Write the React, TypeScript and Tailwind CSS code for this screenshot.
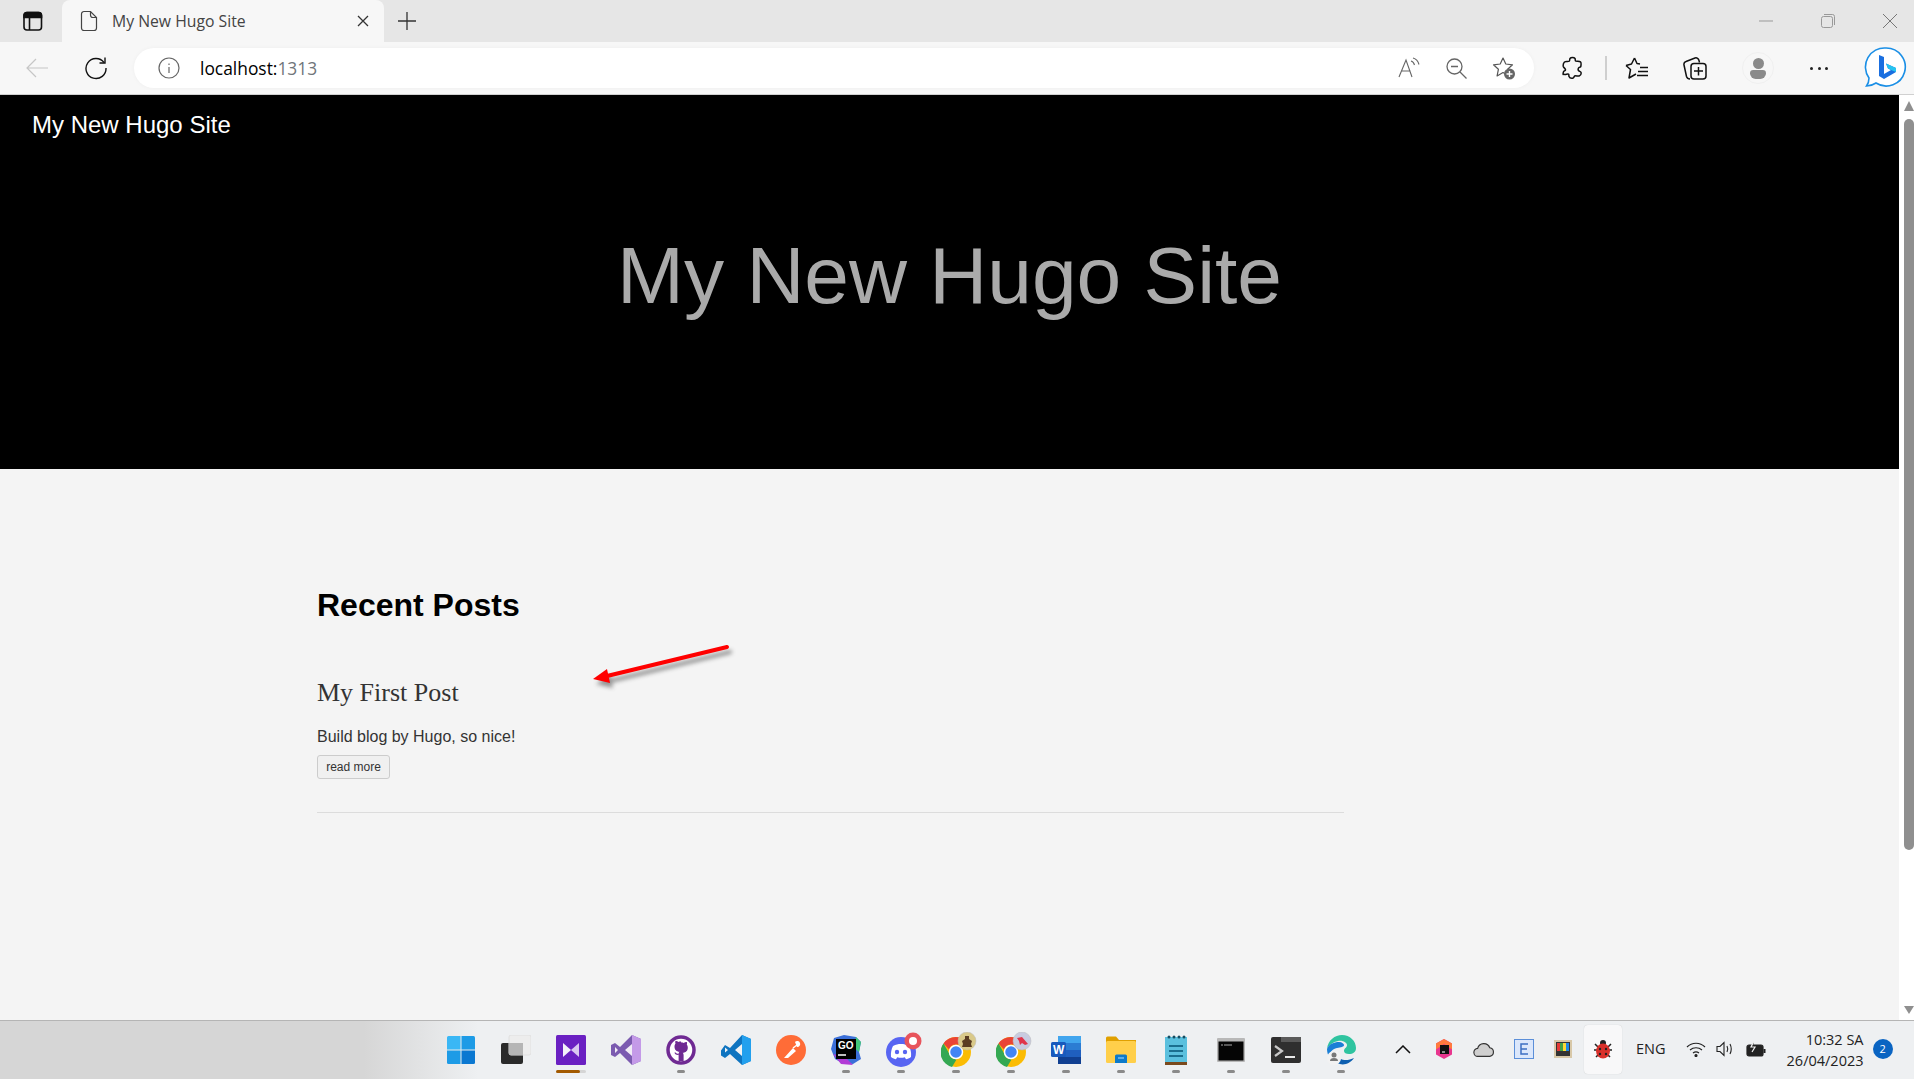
import React from "react";

const Tab = () => (
  <div className="flex h-[42px] w-full items-end bg-[#e6e6e6] pl-[23px]">
    <div className="flex h-[42px] w-[39px] items-center justify-start">
      <svg width="20" height="20" viewBox="0 0 20 20" fill="none" stroke="#111" strokeWidth="1.600">
        <rect x="1" y="1.500" width="17.500" height="17.500" rx="3" />
        <path d="M6.500 6.500V19" />
        <path d="M1 6.500V4.500A3 3 0 0 1 4 1.500h11.500a3 3 0 0 1 3 3v2z" fill="#111" />
      </svg>
    </div>
    <div className="flex h-[42px] w-[322px] items-center rounded-t-[8px] bg-[#f7f7f7] pl-[18px] pr-[15px]">
      <svg width="18" height="22" viewBox="0 0 18 22" fill="none" stroke="#444" strokeWidth="1.200">
        <path d="M4 1.500h6.500L16.500 7.500V18a2.500 2.500 0 0 1-2.500 2.500H4A2.500 2.500 0 0 1 1.500 18V4A2.500 2.500 0 0 1 4 1.500z" />
        <path d="M10.500 1.500V5a2.500 2.500 0 0 0 2.500 2.500h3.500" />
      </svg>
      <span className="ml-[14px] flex-1 pt-[1px] font-['Open_Sans',sans-serif] text-[15.750px] text-[#444]">My New Hugo Site</span>
      <svg width="12" height="12" viewBox="0 0 12 12" stroke="#333" strokeWidth="1.300">
        <path d="M1 1l10 10M11 1L1 11" />
      </svg>
    </div>
    <div className="flex h-[42px] w-[46px] items-center justify-center">
      <svg width="20" height="20" viewBox="0 0 20 20" stroke="#333" strokeWidth="1.300">
        <path d="M10 1v18M1 10h18" />
      </svg>
    </div>
    <div className="flex-1" />
    <div className="flex h-[42px] items-center pr-[17px]">
      <svg width="14" height="2" viewBox="0 0 14 2" className="mr-[48px]">
        <path d="M0 1h14" stroke="#999" strokeWidth="1" />
      </svg>
      <svg width="14" height="14" viewBox="0 0 14 14" fill="none" stroke="#999" className="mr-[48px]">
        <rect x="0.500" y="2.500" width="11" height="11" rx="2" />
        <path d="M3 .5h8.500a2 2 0 0 1 2 2V11" />
      </svg>
      <svg width="14" height="14" viewBox="0 0 14 14" stroke="#777" strokeWidth="1">
        <path d="M0 0l14 14M14 0L0 14" />
      </svg>
    </div>
  </div>
);

const BingIcon = () => (
  <svg width="44" height="44" viewBox="0 0 44 44" fill="none">
    <path d="M22 2a19 19 0 1 1-10 35c-3 2-6 3-9.500 3 1.500-2 2.500-4.500 2.500-8A19 19 0 0 1 22 2z" fill="#fff" stroke="#1b8fe6" strokeWidth="1.600" />
    <path d="M15 9l5 2v17l7-4-3-1.500-2-5 10 4.500v4l-12 7-5-3z" fill="#1a6fe0" />
    <path d="M22 17.500l10 4.500v4l-5-2-3-1.500z" fill="#27c4f0" />
  </svg>
);

const Toolbar = () => (
  <div className="flex h-[53px] w-full items-center border-b border-[#d0d0d0] bg-[#f7f7f7]">
    <div className="flex w-[134px] items-center">
      <svg width="24" height="24" viewBox="0 0 24 24" fill="none" stroke="#c6c6c6" strokeWidth="1.200" className="ml-[25px]">
        <path d="M23 12H2M11 3l-9 9 9 9" />
      </svg>
      <svg width="24" height="24" viewBox="0 0 24 24" fill="none" stroke="#111" strokeWidth="1.400" className="ml-[35px]">
        <path d="M20 6.500A10 10 0 1 0 22 12" />
        <path d="M21 1.500V7h-5.500" />
      </svg>
    </div>
    <div className="flex h-[40px] w-[1400px] items-center rounded-full bg-white pl-[24px] pr-[18px] shadow-[0_0_4px_rgba(0,0,0,0.04)]">
      <svg width="22" height="22" viewBox="0 0 22 22" fill="none" stroke="#666" strokeWidth="1.200">
        <circle cx="11" cy="11" r="10" />
        <path d="M11 10v6M11 6.500v1.500" />
      </svg>
      <span className="ml-[20px] flex-1 font-['Open_Sans',sans-serif] text-[17.400px] text-black">
        localhost:<span className="text-[#70757a]">1313</span>
      </span>
      <svg width="22" height="22" viewBox="0 0 22 22" fill="none" stroke="#666" strokeWidth="1.100" className="mr-[26px]">
        <path d="M1 20L8 3l6 17M3.500 14h9" />
        <path d="M13 4c2 .5 3 2 3.500 4M15 1c3 .8 5 3 6 6.500" />
      </svg>
      <svg width="21" height="21" viewBox="0 0 21 21" fill="none" stroke="#666" strokeWidth="1.300" className="mr-[25px]">
        <circle cx="8.500" cy="8.500" r="7.500" />
        <path d="M5 8.500h7M14 14l6.500 6.500" />
      </svg>
      <svg width="24" height="24" viewBox="0 0 24 24" fill="none">
        <path d="M11 2l2.800 6 6.700.8-4.900 4.500 1.300 6.600-5.900-3.300-5.900 3.300 1.300-6.600L1.500 8.800 8.200 8z" stroke="#555" strokeWidth="1.200" strokeLinejoin="round" />
        <circle cx="17.500" cy="18" r="5.500" fill="#666" />
        <path d="M17.500 15v6M14.500 18h6" stroke="#fff" strokeWidth="1.400" />
      </svg>
    </div>
    <svg width="22" height="24" viewBox="0 0 22 24" fill="none" stroke="#111" strokeWidth="1.500" className="ml-[28px]">
      <path d="M8 2.500c1-1.500 4-1.500 5 0 .5.800 0 2 .5 2.500.8.700 3.500-.3 5 .8 1 .8.500 3.500.3 4.700-.2 1-1.800.5-2.300 1.500s-.2 2.500.5 3c1 .6 2.200.5 2.200 2 0 1.500-.5 2.500-2 3-1.500.3-3.500-.5-4.500 0-.8.500-.6 2-2.200 2.200-1.600.2-3-.5-3.500-1.800-.4-1 .2-1.800-.5-2.200-1-.5-3.500.8-5 0C.8 19.500 1 17 1.500 15.800c.4-1 1.800-.8 2-2 .2-1-1.800-2-2.200-3.300C1 9 1.500 7 2.500 6c1.300-1 3.500 0 4.700-.8.800-.6.300-1.900.8-2.700z" />
    </svg>
    <div className="ml-[21px] h-[24px] w-[2px] bg-[#cfcfcf]" />
    <svg width="24" height="24" viewBox="0 0 24 24" fill="none" stroke="#111" strokeWidth="1.500" className="ml-[18px]">
      <path d="M9.500 2l2.500 5.500 3 .5M1 9.500l5.500-1.500L9.500 2M1 9.500l4.500 4L4 22l7-4" strokeLinejoin="round" />
      <path d="M15 11.500h8M13 15.500h10M12 19.500h11" />
    </svg>
    <svg width="24" height="24" viewBox="0 0 24 24" fill="none" stroke="#111" strokeWidth="1.500" className="ml-[34px]">
      <path d="M7 23c-2 0-3-1-3.500-2.500L1 9c-.4-2 .5-3 2-3.500L12 2c2-.5 3.500.5 4 2.500l.5 2" />
      <rect x="8" y="7.500" width="15" height="15.500" rx="3" fill="#f7f7f7" />
      <path d="M15.500 11v8.500M11 15h9" />
    </svg>
    <div className="ml-[35px] flex h-[32px] w-[32px] flex-col items-center justify-center rounded-full border border-[#f0f0f0]">
      <div className="h-[11px] w-[11px] rounded-full bg-[#8a8a8a]" />
      <div className="mt-[1px] h-[9px] w-[16px] rounded-b-[7px] rounded-t-[4px] bg-[#8a8a8a]" />
    </div>
    <div className="ml-[36px] flex w-[18px] justify-between">
      <div className="h-[3px] w-[3px] rounded-full bg-[#222]" />
      <div className="h-[3px] w-[3px] rounded-full bg-[#222]" />
      <div className="h-[3px] w-[3px] rounded-full bg-[#222]" />
    </div>
    <div className="ml-[36px]">
      <BingIcon />
    </div>
  </div>
);

const Scrollbar = () => (
  <div className="flex h-full w-[15px] shrink-0 flex-col items-center bg-white pl-[5px]">
    <div className="mt-[6px] h-0 w-0 border-x-[5px] border-b-[10px] border-x-transparent border-b-[#8f8f8f]" />
    <div className="mt-[8px] h-[731px] w-[10px] rounded-t-[5px] rounded-b-[5px] bg-[#8f8f8f]" />
    <div className="flex-1" />
    <div className="mb-[6px] h-0 w-0 border-x-[5px] border-t-[8px] border-x-transparent border-t-[#8f8f8f]" />
  </div>
);

const Page = () => (
  <div className="relative flex min-h-0 w-full flex-1">
    <div className="flex min-w-0 flex-1 flex-col bg-[#f4f4f4] font-['Liberation_Sans',sans-serif]">
      <div className="h-[374px] bg-black">
        <div className="pl-[32px] pt-[14px] text-[24px] leading-[32px] text-white">My New Hugo Site</div>
        <h1 className="mt-[88px] text-center text-[80.300px] leading-[92px] text-[#aaaaaa]">My New Hugo Site</h1>
      </div>
      <div className="ml-[317px] w-[1027px] pt-[117px]">
        <h2 className="text-[32px] font-bold leading-[38px] text-black">Recent Posts</h2>
        <h3 className="mt-[54px] font-['Liberation_Serif',serif] text-[26px] leading-[30px] text-[#333]">My First Post</h3>
        <p className="mt-[18px] text-[16px] leading-[22px] text-[#333]">Build blog by Hugo, so nice!</p>
        <div className="mt-[7px] flex h-[24px] w-[73px] items-center justify-center rounded-[3px] border border-[#ccc] bg-[#f0f0f0] text-[12px] text-[#333]">read more</div>
        <div className="mt-[33px] h-px w-full bg-[#dcdcdc]" />
      </div>
    </div>
    <Scrollbar />
    {/* annotation arrow drawn over the page */}
    <svg className="absolute left-[585px] top-[540px]" width="160" height="64" viewBox="0 0 160 64" fill="none">
      <g opacity="0.5" transform="translate(3 5)" style={{ filter: "blur(2px)" }}>
        <path d="M142 12L22 41" stroke="#333" strokeWidth="4" strokeLinecap="round" />
        <path d="M8 44l14-10 3 14z" fill="#333" />
      </g>
      <path d="M142 12L22 41" stroke="#ff0000" strokeWidth="4" strokeLinecap="round" />
      <path d="M8 44l14-10 3 14z" fill="#ff0000" />
    </svg>
  </div>
);

const Dot = ({ wide, color }: { wide?: boolean; color?: string }) => (
  <div className={wide ? "mt-[3px] flex h-[3px] w-[30px] rounded-full bg-[#d5d5d5]" : "mt-[3px] h-[3px] w-[8px] rounded-full bg-[#8a8a8a]"}>
    {wide && <div className="h-[3px] w-[24px] rounded-full" style={{ background: color }} />}
  </div>
);

const AppIcon = ({ children, dot, running }: { children: React.ReactNode; dot?: boolean; running?: boolean }) => (
  <div className="flex w-[55px] flex-col items-center">
    <div className="flex h-[34px] items-center justify-center">{children}</div>
    {dot ? <Dot /> : running ? <Dot wide color="#a35a00" /> : <div className="mt-[3px] h-[3px]" />}
  </div>
);

const Chrome = ({ badge, fill }: { badge: React.ReactNode; fill: string }) => (
  <svg width="36" height="36" viewBox="0 0 36 36" className="ml-[6px]">
    <circle cx="15" cy="20" r="15" fill="#fbbc04" />
    <path d="M15 5a15 15 0 0 1 13 7.500H15a7.500 7.500 0 0 0-7 5L2.500 11.500A15 15 0 0 1 15 5z" fill="#ea4335" />
    <path d="M2.500 11.500L8.500 22a7.500 7.500 0 0 0 7 5.500L11 35A15 15 0 0 1 2.500 11.500z" fill="#34a853" />
    <circle cx="15" cy="20" r="6.500" fill="#4285f4" stroke="#fff" strokeWidth="1.500" />
    <circle cx="26" cy="9" r="9" fill={fill} stroke="#bbb" strokeWidth="0.500" />
    {badge}
  </svg>
);

const Taskbar = () => (
  <div className="flex h-[59px] w-full items-center border-t border-[#b5b5b5] bg-[linear-gradient(to_right,#d6d6d6_19%,#eef0f2_25%)] font-['Open_Sans',sans-serif]">
    <div className="ml-[433px] flex pt-[6px]">
      <AppIcon>
        <svg width="30" height="30" viewBox="0 0 30 30">
          <path d="M1 2.500A1.500 1.500 0 0 1 2.500 1H14.500V14.500H1z" fill="#3ab7f5" />
          <path d="M15.500 1h12A1.500 1.500 0 0 1 29 2.500V14.500H15.500z" fill="#1d9be6" />
          <path d="M1 15.500H14.500V29H2.500A1.500 1.500 0 0 1 1 27.500z" fill="#1d9be6" />
          <path d="M15.500 15.500H29v12a1.500 1.500 0 0 1-1.500 1.500h-12z" fill="#0b78d1" />
        </svg>
      </AppIcon>
      <AppIcon>
        <svg width="30" height="30" viewBox="0 0 30 30">
          <rect x="0" y="8" width="22" height="21" rx="2" fill="#2a2a2a" />
          <rect x="8" y="0" width="22" height="20" rx="2" fill="#ededed" stroke="#e0e0e0" />
          <rect x="8" y="8" width="14" height="12" fill="#b5b5b5" />
        </svg>
      </AppIcon>
      <AppIcon running>
        <svg width="30" height="30" viewBox="0 0 30 30">
          <rect width="30" height="30" rx="1.500" fill="#6a20c2" />
          <path d="M7 8l8 7-8 7z" fill="#f4f0fa" />
          <path d="M23 8l-8 7 8 7z" fill="#d9c8f0" />
        </svg>
      </AppIcon>
      <AppIcon dot={false}>
        <svg width="30" height="30" viewBox="0 0 30 30">
          <path d="M21 0l9 4v22l-9 4L9 18l-5 4-4-2V10l4-2 5 4z" fill="#7b5bb0" />
          <path d="M21 0l9 4v22l-9 4z" fill="#c49ae8" />
          <path d="M4 12v6l3-3zM21 9l-7 6 7 6z" fill="#f0ecf5" />
        </svg>
      </AppIcon>
      <AppIcon dot>
        <svg width="30" height="30" viewBox="0 0 30 30">
          <circle cx="15" cy="15" r="13" fill="#fff" stroke="#6f2a93" strokeWidth="3.500" />
          <path d="M15 6.500c-1 0-2 .2-2.500.4-1-.8-2.500-1-3-.9-.4 1-.3 2 0 2.500-.8 1-1 2-1 3 0 3.500 2 5 5 5.300-.5.500-.7 1-.8 1.700-1 .4-2.500.4-3.300-1.200l-1 .5c1 2 2.500 2.300 4.200 2V26h5v-6c0-1-.3-1.700-.8-2.200 3-.3 5-1.800 5-5.300 0-1-.3-2-1-3 .3-.5.400-1.500 0-2.500-.5-.1-2 .1-3 .9-.5-.2-1.500-.4-2.500-.4z" fill="#6f2a93" />
        </svg>
      </AppIcon>
      <AppIcon>
        <svg width="30" height="30" viewBox="0 0 30 30">
          <path d="M21 0l9 4v22l-9 4-12-11-5 4-4-2.500v-5L4 10l5 3z" fill="#0e74c0" />
          <path d="M21 0l9 4v22l-9 4z" fill="#22a0ee" />
          <path d="M4 12.500v5l3-2.500zM21 9l-7 6 7 6z" fill="#f0f2f4" />
        </svg>
      </AppIcon>
      <AppIcon>
        <svg width="30" height="30" viewBox="0 0 30 30">
          <circle cx="15" cy="15" r="15" fill="#ff6c37" />
          <path d="M8 23l9-10 3 3-8 7zM19 7a3 3 0 1 1 2 5z" fill="#fff" />
          <path d="M17 13l4-3" stroke="#fff" strokeWidth="1.500" />
        </svg>
      </AppIcon>
      <AppIcon dot>
        <svg width="32" height="32" viewBox="0 0 32 32">
          <path d="M4 4l10-3 12 2 5 5-2 10 2 7-8 5-11-1-7-4-4-10z" fill="#3b6fd8" />
          <path d="M26 3l5 5-2 10-6-5z" fill="#42c77a" />
          <path d="M3 20l8 10 12 1-8-8z" fill="#b13bd6" />
          <rect x="6" y="5" width="20" height="20" fill="#000" />
          <text x="8" y="15" fontSize="10" fontWeight="700" fill="#fff" fontFamily="Liberation Sans">GO</text>
          <path d="M8 21h8" stroke="#fff" strokeWidth="1.500" />
        </svg>
      </AppIcon>
      <AppIcon dot>
        <svg width="36" height="36" viewBox="0 0 36 36" className="ml-[6px]">
          <circle cx="15" cy="20" r="15" fill="#5865f2" />
          <path d="M7 14c3-1.500 5-2 8-2s5 .5 8 2c1.500 3 2.500 6.500 2 11-2 1.500-3.500 2-5 2.200l-1.200-2c-2.500.8-5 .8-7.600 0l-1.200 2c-1.500-.2-3-.7-5-2.200-.4-4.500.5-8 2-11z" fill="#fff" />
          <circle cx="11" cy="20" r="2.200" fill="#5865f2" />
          <circle cx="19" cy="20" r="2.200" fill="#5865f2" />
          <circle cx="27" cy="9" r="8.500" fill="#e8545c" />
          <circle cx="27" cy="9" r="4" fill="#fff" />
        </svg>
      </AppIcon>
      <AppIcon dot>
        <Chrome fill="#d9c98a" badge={<path d="M24 4h4v3l3 2-1 3 1 3h-10l1-3-1-3 3-2z" fill="#5a3c22" />} />
      </AppIcon>
      <AppIcon dot>
        <Chrome fill="#c8cbe0" badge={<path d="M21 6l5-1 6 7-3 1-3-2-2 2-1-4z" fill="#e0344a" />} />
      </AppIcon>
      <AppIcon dot>
        <svg width="30" height="30" viewBox="0 0 30 30">
          <rect x="7" y="1" width="23" height="28" rx="2" fill="#1f5fbf" />
          <rect x="7" y="1" width="23" height="7" fill="#41a5ee" />
          <rect x="7" y="8" width="23" height="7" fill="#2b7cd3" />
          <rect x="7" y="22" width="23" height="7" fill="#103f91" />
          <rect x="0" y="7" width="15" height="15" rx="1.500" fill="#185abd" />
          <text x="2" y="19" fontSize="12" fontWeight="700" fill="#fff" fontFamily="Liberation Sans">W</text>
        </svg>
      </AppIcon>
      <AppIcon dot>
        <svg width="32" height="30" viewBox="0 0 32 30">
          <path d="M1 3a1.500 1.500 0 0 1 1.500-1.500H11l3 3.500h17v3H1z" fill="#e0a000" />
          <rect x="1" y="6" width="30" height="22" rx="1.500" fill="#ffcf4a" />
          <path d="M10 21a1.500 1.500 0 0 1 1.500-1.500h9A1.500 1.500 0 0 1 22 21v7H10z" fill="#0d7ac9" />
          <path d="M13 23h6" stroke="#8fd0ff" strokeWidth="1.200" />
        </svg>
      </AppIcon>
      <AppIcon dot>
        <svg width="24" height="30" viewBox="0 0 24 30">
          <rect x="1" y="2" width="22" height="26" fill="#5bc0de" />
          <rect x="1" y="27" width="22" height="3" fill="#7a4a1e" />
          <circle cx="5" cy="2" r="1.500" fill="#164e63" />
          <circle cx="10" cy="2" r="1.500" fill="#164e63" />
          <circle cx="15" cy="2" r="1.500" fill="#164e63" />
          <circle cx="20" cy="2" r="1.500" fill="#164e63" />
          <path d="M5 11h14M5 16h14M5 21h14" stroke="#1b6f8f" strokeWidth="2" />
        </svg>
      </AppIcon>
      <AppIcon dot>
        <svg width="28" height="24" viewBox="0 0 28 24">
          <rect width="28" height="24" rx="1" fill="#b8b8b8" />
          <rect x="1.500" y="3.500" width="25" height="19" fill="#050505" />
          <path d="M4 7h2M7 7h8" stroke="#aaa" strokeWidth="1" />
        </svg>
      </AppIcon>
      <AppIcon dot>
        <svg width="30" height="26" viewBox="0 0 30 26">
          <rect width="30" height="26" rx="2" fill="#2f2f2f" />
          <rect x="10" y="0" width="20" height="5" fill="#5a5a5a" />
          <path d="M4 9l7 5-7 5" fill="none" stroke="#c8c8c8" strokeWidth="2.200" />
          <path d="M14 20h10" stroke="#e8e8e8" strokeWidth="2" />
        </svg>
      </AppIcon>
      <AppIcon dot>
        <svg width="30" height="30" viewBox="0 0 30 30">
          <path d="M1 14C2 5 9 0 16 0c8 0 14 6 14 13 0 4-3 6-7 6-3 0-5-1-5-3 0-3 3-3 3-6 0-2-4-5-9-4C7 7 3 10 1 14z" fill="#2fc4a0" />
          <path d="M1 14C3 9 8 7 13 7c3 0 5 2 5 3 0 2-3 2-7 3-5 1-8 5-8 9-1-2-2-5-2-8z" fill="#1b7fd6" />
          <path d="M11 28c6 3 13 1 17-5-4 2-10 3-13 1z" fill="#0d5fb0" />
          <circle cx="8" cy="23" r="7" fill="#f2f2f2" />
          <circle cx="8" cy="20" r="2.500" fill="#777" />
          <path d="M4 26a4 3 0 0 1 8 0z" fill="#777" />
        </svg>
      </AppIcon>
    </div>
    <div className="flex flex-1 items-center pb-[2px]">
      <svg width="16" height="9" viewBox="0 0 16 9" fill="none" stroke="#111" strokeWidth="1.500" className="ml-[27px]">
        <path d="M1 8l7-7 7 7" />
      </svg>
      <svg width="18" height="20" viewBox="0 0 18 20" className="ml-[24px]">
        <path d="M9 0l8 4.500v11L9 20l-8-4.500v-11z" fill="#e8368f" />
        <path d="M9 0l8 4.500v6L9 5 1 10.500v-6z" fill="#ff7a3d" />
        <rect x="5" y="6" width="9" height="9" fill="#111" />
        <path d="M7 13h3" stroke="#fff" />
      </svg>
      <svg width="24" height="15" viewBox="0 0 20 13" className="ml-[19px]">
        <path d="M5 12.500a3.500 3.500 0 0 1-.5-7A5.500 5.500 0 0 1 15 5a3.800 3.800 0 0 1 0 7.500z" fill="#cfcfcf" stroke="#333" />
      </svg>
      <svg width="20" height="20" viewBox="0 0 20 20" className="ml-[18px]">
        <rect x="0.500" y="0.500" width="19" height="19" fill="#dbe7fb" stroke="#5b8fd9" />
        <path d="M14 5H7v10h7M7 10h6" fill="none" stroke="#3c6fc2" strokeWidth="1.500" />
      </svg>
      <svg width="18" height="18" viewBox="0 0 18 18" className="ml-[20px]">
        <rect width="18" height="18" fill="#d8c8a8" />
        <rect x="2" y="2" width="14" height="14" fill="#333" />
        <rect x="3" y="3" width="3" height="8" fill="#e53935" />
        <rect x="6" y="3" width="3" height="8" fill="#43a047" />
        <rect x="9" y="3" width="3" height="8" fill="#fdd835" />
        <rect x="12" y="3" width="3" height="8" fill="#1e88e5" />
      </svg>
      <div className="ml-[12px] flex h-[49px] w-[38px] items-center justify-center rounded-[4px] bg-[#f8f8f9] shadow-[0_0_1px_rgba(0,0,0,0.2)]">
        <svg width="20" height="20" viewBox="0 0 20 20">
          <path d="M2 5l3 3M18 5l-3 3M1 11h3M19 11h-3M3 18l3-3M17 18l-3-3" stroke="#222" strokeWidth="1.500" />
          <circle cx="10" cy="4" r="3" fill="#222" />
          <ellipse cx="10" cy="12" rx="7" ry="7.500" fill="#d9302a" />
          <circle cx="7" cy="10" r="1.200" fill="#222" />
          <circle cx="13" cy="10" r="1.200" fill="#222" />
          <circle cx="7" cy="15" r="1.200" fill="#222" />
          <circle cx="13" cy="15" r="1.200" fill="#222" />
        </svg>
      </div>
      <span className="ml-[14px] text-[14.500px] text-[#222]">ENG</span>
      <svg width="20" height="15" viewBox="0 0 20 15" fill="none" stroke="#222" strokeWidth="1.200" className="ml-[20px]">
        <path d="M1 5c5-5 13-5 18 0M4 8c3.500-3 8.500-3 12 0M7 11c2-1.500 4-1.500 6 0" />
        <circle cx="10" cy="13.500" r="1" fill="#222" />
      </svg>
      <svg width="20" height="16" viewBox="0 0 20 16" fill="none" stroke="#222" strokeWidth="1.100" className="ml-[10px]">
        <path d="M1 5.500h3l4-4v13l-4-4H1z" />
        <path d="M11 5c1 2 1 4 0 6M14 3c1.500 3 1.500 7 0 10" />
      </svg>
      <svg width="20" height="16" viewBox="0 0 20 16" fill="none" stroke="#222" strokeWidth="1.200" className="ml-[10px]">
        <rect x="1" y="4" width="16" height="11" rx="2" fill="#222" />
        <path d="M18.500 8v4" strokeWidth="2" />
        <path d="M8 0L5 6h4L6 11" stroke="#f0f0f0" fill="#222" />
      </svg>
      <div className="ml-[13px] w-[85px] pt-[2px] text-right text-[14.500px] leading-[21px] text-[#222]">
        <div>10:32 SA</div>
        <div>26/04/2023</div>
      </div>
      <div className="ml-[9px] flex h-[20px] w-[20px] items-center justify-center rounded-full bg-[#0a64c2] text-[11px] text-white">2</div>
    </div>
  </div>
);

export default function App() {
  return (
    <div className="flex h-[1079px] w-[1914px] flex-col overflow-hidden">
      <Tab />
      <Toolbar />
      <Page />
      <Taskbar />
    </div>
  );
}
